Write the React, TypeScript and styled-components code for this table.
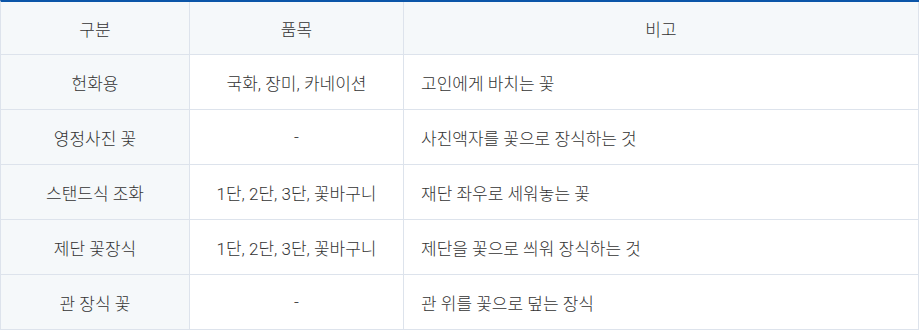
import React from "react";
import styled, { createGlobalStyle } from "styled-components";

const Global = createGlobalStyle`
  html, body { margin: 0; padding: 0; background: #ffffff; }
  body { font-family: "Noto Sans CJK KR", "Noto Sans", sans-serif; }
`;

const Table = styled.table`
  width: 919px;
  table-layout: fixed;
  border-collapse: separate;
  border-spacing: 0;
  border-top: 2px solid #0b55a8;
  border-left: 1px solid #dde3ec;
  font-family: Roboto, "Noto Sans CJK KR", sans-serif;
  font-size: 17px;
  font-weight: 300;
  color: #333333;
`;

const Col = styled.col<{ $w: number }>`
  width: ${(p) => p.$w}px;
`;

const Th = styled.th`
  box-sizing: border-box;
  height: 53px;
  padding: 0 16px;
  background: #f5f8fa;
  border-right: 1px solid #dde3ec;
  border-bottom: 1px solid #dde3ec;
  font-weight: 300;
  text-align: center;
  vertical-align: middle;
`;

const Td = styled.td<{ $head?: boolean; $left?: boolean }>`
  box-sizing: border-box;
  height: 55px;
  padding: 0 ${(p) => (p.$left ? "17px" : "16px")};
  background: ${(p) => (p.$head ? "#f5f8fa" : "#ffffff")};
  border-right: 1px solid #dde3ec;
  border-bottom: 1px solid #dde3ec;
  text-align: ${(p) => (p.$left ? "left" : "center")};
  vertical-align: middle;
`;

const rows: [string, string, string][] = [
  ["헌화용", "국화, 장미, 카네이션", "고인에게 바치는 꽃"],
  ["영정사진 꽃", "-", "사진액자를 꽃으로 장식하는 것"],
  ["스탠드식 조화", "1단, 2단, 3단, 꽃바구니", "재단 좌우로 세워놓는 꽃"],
  ["제단 꽃장식", "1단, 2단, 3단, 꽃바구니", "제단을 꽃으로 씌워 장식하는 것"],
  ["관 장식 꽃", "-", "관 위를 꽃으로 덮는 장식"],
];

export default function App() {
  return (
    <>
      <Global />
      <Table>
        <colgroup>
          <Col $w={189} />
          <Col $w={214} />
          <Col $w={515} />
        </colgroup>
        <thead>
          <tr>
            <Th>구분</Th>
            <Th>품목</Th>
            <Th>비고</Th>
          </tr>
        </thead>
        <tbody>
          {rows.map((r) => (
            <tr key={r[0]}>
              <Td $head>{r[0]}</Td>
              <Td>{r[1]}</Td>
              <Td $left>{r[2]}</Td>
            </tr>
          ))}
        </tbody>
      </Table>
    </>
  );
}
